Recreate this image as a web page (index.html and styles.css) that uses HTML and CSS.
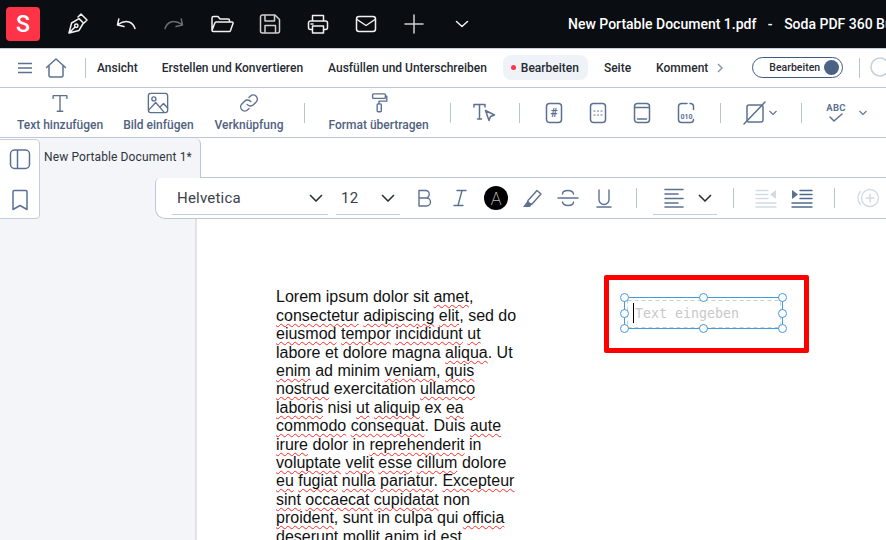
FILE: index.html
```
<!DOCTYPE html>
<html lang="de">
<head>
<meta charset="utf-8">
<title>Soda PDF</title>
<link rel="stylesheet" href="styles.css">
</head>
<body>
<div class="app">
  <header class="topbar">
    <div class="logo">S</div>
    <div class="top-icons">
      <svg class="ic" viewBox="0 0 24 24"><path d="M3 21l2.6-10L13 6.6l4.4 4.4-4.4 7.400zM12 5l3-3 6 6-3 3M3 21l6-6"/><circle cx="10.300" cy="13.700" r="1.700"/></svg>
      <svg class="ic" viewBox="0 0 24 24"><path d="M21 16.500C19 10.500 13 6.500 4 12.500M4.800 7L3.500 13l6.500 1.500"/></svg>
      <svg class="ic dim" viewBox="0 0 24 24"><path d="M3 16.500C5 10.500 11 6.500 20 12.500M19.200 7l1.300 6-6.500 1.500"/></svg>
      <svg class="ic" viewBox="0 0 24 24"><path d="M2 18.500V6a1.500 1.500 0 0 1 1.500-1.500H8l2 2.500h8a1.500 1.500 0 0 1 1.500 1.500V10M2 18.500l2.800-7.500a1.500 1.500 0 0 1 1.400-1H22a1 1 0 0 1 1 1.400l-2.600 7.400a1.200 1.200 0 0 1-1.100.8H3.500A1.500 1.500 0 0 1 2 18.500z"/></svg>
      <svg class="ic soft" viewBox="0 0 24 24"><path d="M2.500 5a2 2 0 0 1 2-2H17l4.500 4.500V19a2 2 0 0 1-2 2h-15a2 2 0 0 1-2-2zM7 3v6h9.500V3M7 21v-7.500h10.500V21"/></svg>
      <svg class="ic" viewBox="0 0 24 24"><path d="M6.500 9V3.500h11V9M6.500 17.500H4.500a2 2 0 0 1-2-2V11a2 2 0 0 1 2-2h15a2 2 0 0 1 2 2v4.500a2 2 0 0 1-2 2h-2M6.500 14h11v7h-11zM5 12h2"/></svg>
      <svg class="ic" viewBox="0 0 24 24"><rect x="2.500" y="4.500" width="19" height="15" rx="2.500"/><path d="M3 7.500l9 6 9-6"/></svg>
      <svg class="ic soft" viewBox="0 0 24 24"><path d="M12 3v18M3 12h18"/></svg>
      <svg class="ic" viewBox="0 0 24 24"><path d="M6.500 9.500L12 14.500l5.500-5"/></svg>
    </div>
    <div class="doc-title">New Portable Document 1.pdf<span class="title-dash">-</span>Soda PDF 360 Business</div>
  </header>

  <nav class="menubar">
    <svg class="ic-menu" viewBox="0 0 16 12"><path d="M1 1.500h14M1 6h14M1 10.500h14"/></svg>
    <svg class="ic-home" viewBox="0 0 22 22"><path d="M1.500 10.500L11 2l9.500 8.500M4 9v9.500a1.500 1.500 0 0 0 1.500 1.500h11a1.500 1.500 0 0 0 1.500-1.500V9"/></svg>
    <span class="vsep menu-sep"></span>
    <a class="menu-item">Ansicht</a>
    <a class="menu-item wide">Erstellen und Konvertieren</a>
    <a class="menu-item">Ausfüllen und Unterschreiben</a>
    <a class="menu-item active"><i class="dot"></i>Bearbeiten</a>
    <a class="menu-item wide">Seite</a>
    <a class="menu-item">Komment</a>
    <svg class="menu-more" viewBox="0 0 8 12"><path d="M2 2l4 4-4 4"/></svg>
    <div class="toggle"><span>Bearbeiten</span><i class="knob"></i></div>
    <span class="vsep search-sep"></span>
    <svg class="search" viewBox="0 0 24 24"><circle cx="11" cy="11" r="9"/></svg>
  </nav>

  <section class="ribbon">
    <div class="tool">
      <svg class="ti" viewBox="0 0 24 24"><path d="M4.500 7V4h15v3M12 4v17M9 21h6"/></svg>
      <span>Text hinzufügen</span>
    </div>
    <div class="tool tool-image">
      <svg class="ti" viewBox="0 0 24 24"><rect x="1.500" y="1.500" width="21" height="21" rx="2.500"/><circle cx="7.500" cy="7.500" r="2.200"/><path d="M2 19.500l7.500-8 9 10.500M14.500 16l3.500-3.500 4.500 5"/></svg>
      <span>Bild einfügen</span>
    </div>
    <div class="tool">
      <svg class="ti" viewBox="0 0 24 24"><path d="M10 13.500a4.500 4.500 0 0 0 6.800.5l3-3a4.500 4.500 0 0 0-6.400-6.400l-1.400 1.400M14 10.500a4.500 4.500 0 0 0-6.800-.5l-3 3a4.500 4.500 0 0 0 6.400 6.400l1.400-1.400"/></svg>
      <span>Verknüpfung</span>
    </div>
    <span class="vsep sep-a"></span>
    <div class="tool tool-format">
      <svg class="ti" viewBox="0 0 24 24"><rect x="5" y="2" width="14" height="5" rx="1"/><path d="M19 4.500h1.500V10H12v3"/><rect x="10" y="13" width="4.500" height="8.500" rx="1"/></svg>
      <span>Format übertragen</span>
    </div>
    <span class="vsep sep-b"></span>
    <svg class="ri" viewBox="0 0 24 24"><path d="M1 6V3.500h11V6M6.500 3.500V18M4.500 18h4M12.500 9.500l9 4.500-4 1.500-1.500 4z"/></svg>
    <span class="vsep sep-c"></span>
    <div class="ri-group">
      <svg class="ri" viewBox="0 0 24 24"><rect x="4.500" y="2.500" width="15" height="19" rx="3"/><text x="12" y="16" class="ri-hash">#</text></svg>
      <svg class="ri" viewBox="0 0 24 24"><rect x="4.500" y="2.500" width="15" height="19" rx="3"/><path class="dots" d="M8 10h1M11.500 10h1M15 10h1M8 14h1M11.500 14h1M15 14h1"/></svg>
      <svg class="ri" viewBox="0 0 24 24"><rect x="4.500" y="2.500" width="15" height="19" rx="3"/><path d="M5 6.500h14M7.500 18h9"/></svg>
      <svg class="ri" viewBox="0 0 24 24"><path d="M13 2.500H7.500a3 3 0 0 0-3 3v13a3 3 0 0 0 3 3h9a3 3 0 0 0 3-3M16 2.500a3 3 0 0 1 3.500 3v3"/><text x="12.500" y="17.500" class="ri-bin">010</text></svg>
    </div>
    <span class="vsep sep-d"></span>
    <svg class="ri" viewBox="0 0 24 24"><rect x="4" y="4" width="16" height="17" rx="2"/><path d="M1 23L22 1"/></svg>
    <svg class="mini" viewBox="0 0 10 6"><path d="M1.500 1L5 4.500 8.500 1"/></svg>
    <span class="vsep sep-e"></span>
    <svg class="ri" viewBox="0 0 24 24"><text x="12" y="9.500" class="ri-abct">ABC</text><path d="M6 16l4 4 8-7"/></svg>
    <svg class="mini mini-abc" viewBox="0 0 10 6"><path d="M1.500 1L5 4.500 8.500 1"/></svg>
  </section>

  <main class="workspace">
    <aside class="side-card">
      <svg class="side-ic" viewBox="0 0 22 22"><rect x="1.500" y="2" width="19" height="18.500" rx="4"/><path d="M8.500 2v18.500"/></svg>
      <svg class="side-ic" viewBox="0 0 22 22"><path d="M4 2.500a1 1 0 0 1 1-1h12a1 1 0 0 1 1 1v18l-7-4-7 4z"/></svg>
    </aside>

    <div class="tab-row">
      <div class="tab">New Portable Document 1*</div>
      <div class="tab-rest"></div>
    </div>

    <div class="format-row">
      <div class="format-bar">
        <div class="select sel-font"><span>Helvetica</span><svg class="sel-chev" viewBox="0 0 14 8"><path d="M1 1l6 6 6-6"/></svg></div>
        <div class="select sel-size"><span>12</span><svg class="sel-chev" viewBox="0 0 14 8"><path d="M1 1l6 6 6-6"/></svg></div>
        <div class="fmt-icons">
          <svg class="fi" viewBox="0 0 24 24"><path d="M7 4.500h6.500a3.750 3.750 0 0 1 0 7.500H7zM7 12h7.500a4 4 0 0 1 0 8H7z"/></svg>
          <svg class="fi" viewBox="0 0 24 24"><path d="M9 4.500h9M6 19.500h9M14 4.500l-4 15"/></svg>
          <div class="color-a">A</div>
          <svg class="fi" viewBox="0 0 24 24"><path d="M8 14.500L17 4.500l4 3.500-9 10-4 .5zM8 14.500l-1 5 5-1.500"/><path class="fill" d="M3 21h7l2-3-4.500-3z"/></svg>
          <svg class="fi" viewBox="0 0 24 24"><path d="M17.500 8C17 5 14.500 4.500 12 4.500S6.500 5.500 6.500 8M6.500 16c.5 2.500 3 3.500 5.500 3.500s5.500-1 5.500-3.500M2 12h20"/></svg>
          <svg class="fi" viewBox="0 0 24 24"><path d="M7 4v9.500a5 5 0 0 0 10 0V4M5 21h14"/></svg>
        </div>
        <span class="vsep sep-f"></span>
        <div class="select sel-align">
          <svg class="fi align" viewBox="0 0 24 24"><path d="M3 3.500h18M3 8h13M3 12.500h18M3 17h13M3 21h18"/></svg>
          <svg class="sel-chev" viewBox="0 0 14 8"><path d="M1 1l6 6 6-6"/></svg>
        </div>
        <span class="vsep sep-g"></span>
        <svg class="fi ghost" viewBox="0 0 24 24"><path d="M2 4.500h12M2 8.500h12M2 12.500h12M2 17h20M2 21h20"/><path class="fill" d="M22 4v9l-6-4.500z"/></svg>
        <svg class="fi ind" viewBox="0 0 24 24"><path d="M10 4.500h12M10 8.500h12M10 12.500h12M2 17h20M2 21h20"/><path class="fill" d="M2 4v9l6-4.500z"/></svg>
        <span class="vsep sep-h"></span>
        <svg class="fi ghost" viewBox="0 0 24 24"><circle cx="14" cy="12" r="8.500"/><path d="M14 8v8M10 12h8M4.500 5.500C1 9 1 15 4.500 18.500"/></svg>
      </div>
    </div>

    <div class="stage">
      <div class="gutter"></div>
      <div class="page">
        <p class="lorem">Lorem ipsum dolor sit <u>amet</u>,<br>
<u>consectetur</u> <u>adipiscing</u> <u>elit</u>, sed do<br>
<u>eiusmod</u> <u>tempor</u> <u>incididunt</u> <u>ut</u><br>
labore et dolore magna <u>aliqua</u>. Ut<br>
<u>enim</u> ad minim <u>veniam</u>, <u>quis</u><br>
<u>nostrud</u> exercitation <u>ullamco</u><br>
<u>laboris</u> nisi <u>ut</u> <u>aliquip</u> ex <u>ea</u><br>
<u>commodo</u> <u>consequat</u>. Duis <u>aute</u><br>
<u>irure</u> dolor in <u>reprehenderit</u> in<br>
<u>voluptate</u> <u>velit</u> <u>esse</u> <u>cillum</u> dolore<br>
<u>eu</u> <u>fugiat</u> <u>nulla</u> <u>pariatur</u>. <u>Excepteur</u><br>
<u>sint</u> <u>occaecat</u> <u>cupidatat</u> non<br>
<u>proident</u>, sunt in culpa qui <u>officia</u><br>
<u>deserunt</u> mollit anim id est</p>
        <div class="field-frame"></div>
        <div class="field">
          <svg class="field-sel" viewBox="0 0 170 42">
            <rect class="dash" x="8.500" y="8.500" width="153" height="27"/>
            <rect class="box" x="5.500" y="5.500" width="158" height="31"/>
            <g class="handles">
              <circle cx="5.500" cy="5.500" r="4"/><circle cx="84.500" cy="5.500" r="4"/><circle cx="163.500" cy="5.500" r="4"/>
              <circle cx="5.500" cy="21.500" r="4"/><circle cx="163.500" cy="21.500" r="4"/>
              <circle cx="5.500" cy="36.500" r="4"/><circle cx="84.500" cy="36.500" r="4"/><circle cx="163.500" cy="36.500" r="4"/>
            </g>
          </svg>
          <span class="caret"></span>
          <span class="placeholder">Text eingeben</span>
        </div>
      </div>
    </div>
  </main>
</div>
</body>
</html>
```
FILE: styles.css
```
* { box-sizing: border-box; }
html, body { margin: 0; height: 100%; overflow: hidden; background: #fff; }
body { font-family: Roboto, "Liberation Sans", sans-serif; }
svg { display: block; flex: none; fill: none; }
.app { width: 886px; height: 540px; display: flex; flex-direction: column; overflow: hidden; }

.topbar { height: 48px; flex: none; background: #0a0d12; display: flex; align-items: center; padding-left: 6px; white-space: nowrap; overflow: hidden; }
.logo { width: 34px; height: 34px; flex: none; border-radius: 4px; background: #ff3347; color: #fff; font-size: 23px; font-weight: 500; display: flex; align-items: center; justify-content: center; }
.top-icons { display: flex; gap: 24px; margin-left: 26px; flex: none; }
.ic { width: 24px; height: 24px; stroke: #f2f2f2; stroke-width: 1.5; stroke-linejoin: round; stroke-linecap: round; }
.ic.dim { stroke: #6a6e74; }
.ic.soft { stroke: #cfcfcf; }
.doc-title { margin-left: 94px; flex: none; color: #fff; font-size: 14px; font-weight: 500; white-space: pre; }
.title-dash { margin: 0 11.500px; }

.menubar { height: 40px; flex: none; border-top: 1px solid #c3cddb; border-bottom: 1px solid #bcc7d6; display: flex; align-items: center; padding: 0 0 1px 17px; white-space: nowrap; overflow: hidden; }
.ic-menu { width: 16px; height: 12px; stroke: #5c7191; stroke-width: 1.4; }
.ic-home { width: 22px; height: 22px; margin-left: 12px; stroke: #5c7191; stroke-width: 1.5; stroke-linejoin: round; stroke-linecap: round; }
.vsep { display: block; width: 1px; height: 20px; background: #b9c5d6; flex: none; }
.menu-sep { margin-left: 18px; margin-right: 11px; }
.menu-item { flex: none; font-size: 12px; font-weight: 500; color: #262b33; margin-right: 24px; }
.menu-item.wide { margin-right: 25px; }
.menu-item.active { display: flex; align-items: center; height: 25px; padding: 0 9px 0 8px; background: #eff2f7; border-radius: 8px; margin-left: -8px; margin-right: 16px; }
.dot { width: 5px; height: 5px; border-radius: 50%; background: #ff3347; margin-right: 5px; }
.menu-more { width: 8px; height: 12px; stroke: #8a9ab0; stroke-width: 1.5; margin-left: -16px; }
.toggle { width: 91px; height: 21px; flex: none; border: 1px solid #3f5a80; border-radius: 11px; margin-left: 28px; display: flex; align-items: center; justify-content: space-between; padding: 0 3px 0 16px; font-size: 10.500px; font-weight: 500; color: #262b33; }
.knob { width: 15px; height: 15px; flex: none; border-radius: 50%; background: #4a6284; }
.search-sep { margin-left: 16px; }
.search { width: 24px; height: 24px; margin-left: 9px; stroke: #c6ced9; stroke-width: 1.5; }

.ribbon { height: 50px; flex: none; border-bottom: 1px solid #bcc7d6; display: flex; align-items: center; padding-left: 17px; white-space: nowrap; overflow: hidden; color: #5c7191; }
.tool { flex: none; display: flex; flex-direction: column; align-items: center; margin: -1px 20px 0 0; font-size: 12px; font-weight: 500; color: #4f6280; gap: 4px; }
.tool-image { margin-right: 21px; }
.tool-format { margin-right: 21px; }
.ti { width: 22px; height: 22px; stroke: #5c7191; stroke-width: 1.5; stroke-linecap: round; stroke-linejoin: round; }
.sep-a { margin-left: 1px; margin-right: 23px; }
.sep-b { margin-right: 22px; }
.ri { width: 24px; height: 24px; stroke: #5c7191; stroke-width: 1.5; stroke-linecap: round; stroke-linejoin: round; }
.ri-group { display: flex; gap: 20px; flex: none; }
.sep-c { margin-left: 22px; margin-right: 22px; }
.sep-d { margin-left: 22px; margin-right: 22px; }
.sep-e { margin-left: 23px; margin-right: 22px; }
.ri-hash { font: 700 12px Roboto, sans-serif; fill: #5c7191; stroke: none; text-anchor: middle; }
.ri-bin { font: 700 7px Roboto, sans-serif; fill: #5c7191; stroke: none; text-anchor: middle; }
.ri-abct { font: 700 9.500px Roboto, sans-serif; fill: #5c7191; stroke: none; text-anchor: middle; letter-spacing: .3px; }
.dots { stroke-width: 1.2; }
.mini { width: 10px; height: 6px; stroke: #5c7191; stroke-width: 1.1; margin-left: 1px; }
.mini-abc { margin-left: 10px; }

.workspace { position: relative; flex: 1; display: flex; flex-direction: column; min-height: 0; }
.side-card { position: absolute; left: -1px; top: 1px; width: 41px; height: 80px; background: #fff; border: 1px solid #c3cddb; border-radius: 0 4px 4px 0; display: flex; flex-direction: column; align-items: center; gap: 19px; padding-top: 8px; }
.side-ic { width: 22px; height: 22px; stroke: #5c7191; stroke-width: 1.5; stroke-linejoin: round; }
.tab-row { height: 40px; flex: none; display: flex; }
.tab { margin-left: 40px; width: 161px; background: #f4f5f8; border-right: 1px solid #bcc7d6; border-top-right-radius: 6px; padding: 12px 0 0 4px; font-size: 12px; letter-spacing: .12px; color: #2f343c; white-space: nowrap; }
.tab-rest { flex: 1; border-bottom: 1px solid #bcc7d6; }

.format-row { height: 41px; flex: none; background: linear-gradient(90deg, #f4f5f8 197px, #fff 197px); padding-left: 155px; }
.format-bar { height: 41px; background: #fff; border-left: 1px solid #bcc7d6; border-bottom: 1px solid #bcc7d6; border-bottom-left-radius: 10px; border-top-left-radius: 5px; display: flex; align-items: center; padding-left: 16px; white-space: nowrap; overflow: hidden; color: #5c7191; }
.select { height: 36px; align-self: flex-start; margin-top: 1px; padding: 2px 5px 0; display: flex; align-items: center; justify-content: space-between; border-bottom: 1px solid #c3cddb; font-size: 15px; color: #3a414c; letter-spacing: .2px; flex: none; }
.sel-font { width: 156px; }
.sel-size { width: 64px; margin-left: 8px; }
.sel-align { width: 64px; margin-left: 16px; padding-left: 9px; padding-right: 5px; }
.sel-chev { width: 14px; height: 8px; stroke: #262b33; stroke-width: 1.5; }
.fmt-icons { display: flex; gap: 12px; align-items: center; flex: none; margin-left: 12px; }
.fi { width: 24px; height: 24px; stroke: #5c7191; stroke-width: 1.4; stroke-linejoin: round; stroke-linecap: round; flex: none; }
.fi .fill { fill: #5c7191; stroke: none; }
.fi.align { stroke-width: 1.6; }
.fi.ghost { stroke: #d3dae4; }
.fi.ghost .fill { fill: #d3dae4; }
.fi.ind { stroke: #4f6a8f; margin-left: 12px; }
.color-a { width: 24px; height: 24px; flex: none; border-radius: 50%; background: #000; color: #fff; font-size: 18px; font-weight: 100; display: flex; align-items: center; justify-content: center; }
.sep-f { margin-left: 20px; }
.sep-g { margin-left: 16px; margin-right: 20px; }
.sep-h { margin-left: 20px; margin-right: 21px; }

.stage { flex: 1; display: flex; min-height: 0; }
.gutter { width: 195px; background: #f4f5f8; flex: none; }
.page { position: relative; flex: 1; border-left: 2px solid #e2e2e2; padding: 69.400px 0 0 79px; overflow: hidden; }
.lorem { margin: 0; font-family: "Liberation Sans", Arial, sans-serif; font-size: 16px; line-height: 18.400px; color: #111; white-space: nowrap; }
.lorem u { text-decoration: underline wavy #ff2a26; text-decoration-thickness: 1px; text-underline-offset: 2px; text-decoration-skip-ink: none; }
.field-frame { position: absolute; left: 407px; top: 56px; width: 205px; height: 78px; border: 5px solid #ff0000; border-radius: 2px; }
.field { position: absolute; left: 422px; top: 73px; width: 170px; height: 42px; }
.field-sel { position: absolute; inset: 0; width: 170px; height: 42px; }
.dash { stroke: #cfcfcf; stroke-width: 1; stroke-dasharray: 4 3; }
.box { stroke: #3f9ae0; stroke-width: 1; }
.handles circle { fill: #fff; stroke: #3f9ae0; stroke-width: 1; }
.caret { position: absolute; left: 14px; top: 11px; width: 1px; height: 20px; background: #000; }
.placeholder { position: absolute; left: 16px; top: 14px; font-family: "DejaVu Sans Mono", monospace; font-size: 13.300px; line-height: 16px; color: #c8c8c8; white-space: nowrap; }
```
